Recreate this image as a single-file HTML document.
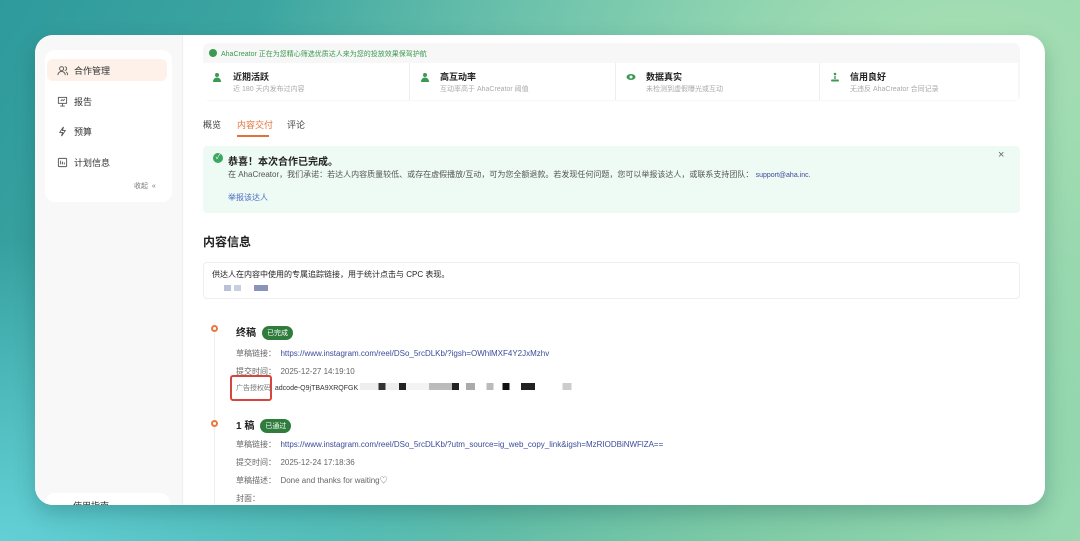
<!DOCTYPE html>
<html><head><meta charset="utf-8"><style>
*{margin:0;padding:0;box-sizing:border-box}
body{width:1080px;height:541px;overflow:hidden;font-family:"Liberation Sans","Noto Sans CJK SC",sans-serif;color:#333;
background:radial-gradient(ellipse 700px 400px at 950px 60px,#a8e0b4 0%,rgba(168,224,180,0) 100%),radial-gradient(ellipse 500px 300px at 0px 541px,#62d0d6 0%,rgba(98,208,214,0) 100%),linear-gradient(120deg,#2f9a9c 0%,#4cb3a8 45%,#7dcaa6 75%,#98d9b0 100%);position:relative}
.card{position:absolute;left:35px;top:35px;width:1010px;height:470px;background:#fff;border-radius:18px;overflow:hidden;box-shadow:0 8px 20px rgba(0,60,60,.25)}
.side{position:absolute;left:0;top:0;width:148px;height:470px;background:#f8f8f8;border-right:1px solid #eee}
.panel{position:absolute;left:10px;top:15px;width:127px;height:152px;background:#fff;border-radius:10px}
.nav{position:absolute;left:2px;width:120px;height:22px;font-size:9px;color:#333;display:flex;align-items:center;padding-left:10px;gap:6px}
.nav.act{background:#fdf1e9;border-radius:6px;color:#333}
.abs{position:absolute;white-space:nowrap}
.grn{color:#3a9a50}
.top{position:absolute;left:168px;top:8px;width:817px;height:58px;background:#f7f7f7;border-radius:6px}
.feat{position:absolute;top:20px;height:37px;background:#fff}
.ft{font-size:9px;font-weight:bold;color:#222;position:absolute;left:30px;top:7px}
.fs{font-size:7px;color:#aaa;position:absolute;left:30px;top:21px}
.fi{position:absolute;left:10px;top:9px;width:10px;height:10px}
.lbl{font-size:8px;color:#666}
.link{color:#3b4c9a}
.badge{display:inline-block;background:#2f7d3c;color:#fff;font-size:7px;padding:2px 5px;border-radius:8px;vertical-align:middle;margin-left:6px;font-weight:normal}
</style></head><body>
<div class="card">
 <div class="side">
  <div class="panel">
   <div class="nav act" style="top:9px"><svg width="11" height="11" viewBox="0 0 12 12" fill="none" stroke="#555" stroke-width="1"><circle cx="5" cy="4" r="2.2"/><path d="M1 11c0-2.5 2-4 4-4s4 1.5 4 4M8.5 2a2 2 0 010 4M10 7.5c1 .6 1.5 1.8 1.5 3.5"/></svg>合作管理</div>
   <div class="nav" style="top:40px"><svg width="11" height="11" viewBox="0 0 12 12" fill="none" stroke="#555" stroke-width="1"><rect x="1.5" y="1.5" width="9" height="6.5"/><path d="M6 8v3M3.5 11h5M4 5.5l1.5-1.5 1.5 1 1.5-1.5"/></svg>报告</div>
   <div class="nav" style="top:70px"><svg width="11" height="11" viewBox="0 0 12 12" fill="none" stroke="#555" stroke-width="1"><path d="M7 1L3 7h3l-1 4 4-6H6z"/></svg>预算</div>
   <div class="nav" style="top:101px"><svg width="11" height="11" viewBox="0 0 12 12" fill="none" stroke="#555" stroke-width="1"><rect x="1.5" y="1.5" width="9" height="9" rx="1"/><path d="M4 4v4M6 5v3M8 6v2"/></svg>计划信息</div>
   <div class="abs" style="left:89px;top:131px;font-size:7px;color:#777">收起 &nbsp;«</div>
  </div>
  <div class="abs" style="left:10px;top:458px;width:125px;height:30px;background:#fff;border-radius:10px;font-size:9px;padding:6px 0 0 28px">使用指南</div>
 </div>

 <div class="top">
  <div class="abs grn" style="left:6px;top:6px;font-size:7px"><span style="display:inline-block;width:8px;height:8px;border-radius:50%;background:#3a9a50;vertical-align:-1px;margin-right:4px"></span>AhaCreator 正在为您精心筛选优质达人来为您的投放效果保驾护航</div>
  <div class="abs" style="left:0;top:20px;width:815px;height:37px;background:#fff"></div>
  <div class="feat" style="left:0;width:206px"><svg class="fi" viewBox="0 0 10 10"><circle cx="4" cy="3" r="2" fill="#3a9a50"/><path d="M0 10c0-3 2-4.5 4-4.5S8 7 8 10z" fill="#3a9a50"/></svg><div class="ft">近期活跃</div><div class="fs">近 180 天内发布过内容</div></div>
  <div class="feat" style="left:206px;width:206px;border-left:1px solid #eee"><svg class="fi" viewBox="0 0 10 10"><circle cx="5" cy="3" r="2" fill="#3a9a50"/><path d="M1 10c0-3 2-4.5 4-4.5S9 7 9 10z" fill="#3a9a50"/></svg><div class="ft">高互动率</div><div class="fs">互动率高于 AhaCreator 阈值</div></div>
  <div class="feat" style="left:412px;width:204px;border-left:1px solid #eee"><svg class="fi" viewBox="0 0 10 10"><ellipse cx="5" cy="5" rx="4.5" ry="3" fill="#3a9a50"/><circle cx="5" cy="5" r="1.5" fill="#fff"/></svg><div class="ft">数据真实</div><div class="fs">未检测到虚假曝光或互动</div></div>
  <div class="feat" style="left:616px;width:199px;border-left:1px solid #eee"><svg class="fi" viewBox="0 0 10 10"><circle cx="5" cy="2" r="1.3" fill="#3a9a50"/><rect x="4.3" y="4" width="1.4" height="3" fill="#3a9a50"/><rect x="1" y="7.5" width="8" height="2" rx="1" fill="#3a9a50"/></svg><div class="ft">信用良好</div><div class="fs">无违反 AhaCreator 合同记录</div></div>
 </div>

 <div class="abs" style="left:168px;top:83px;font-size:9px;color:#444">概览</div>
 <div class="abs" style="left:202px;top:83px;font-size:9px;color:#e0733a">内容交付</div>
 <div class="abs" style="left:202px;top:100px;width:32px;height:2px;background:#e0733a"></div>
 <div class="abs" style="left:252px;top:83px;font-size:9px;color:#444">评论</div>

 <div class="abs" style="left:168px;top:111px;width:817px;height:67px;background:#eefaf4;border-radius:4px">
  <div class="abs" style="left:10px;top:7px;width:10px;height:10px;border-radius:50%;background:#3aa860;color:#fff;font-size:7px;text-align:center;line-height:10px">✓</div>
  <div class="abs" style="left:25px;top:7px;font-size:10px;font-weight:bold;color:#222">恭喜！本次合作已完成。</div>
  <div class="abs" style="left:25px;top:23px;font-size:8px;color:#555">在 AhaCreator，我们承诺：若达人内容质量较低、或存在虚假播放/互动，可为您全额退款。若发现任何问题，您可以举报该达人，或联系支持团队： <span class="link" style="font-size:7px">support@aha.inc.</span></div>
  <div class="abs link" style="left:25px;top:46px;font-size:8px;color:#4a6cc0">举报该达人</div>
  <div class="abs" style="left:795px;top:3px;font-size:11px;color:#666">×</div>
 </div>

 <div class="abs" style="left:168px;top:198px;font-size:12px;font-weight:bold;color:#222">内容信息</div>
 <div class="abs" style="left:168px;top:227px;width:817px;height:37px;border:1px solid #eee;border-radius:4px">
  <div class="abs" style="left:8px;top:6px;font-size:8px;color:#222">供达人在内容中使用的专属追踪链接，用于统计点击与 CPC 表现。</div>
  <div class="abs" style="left:20px;top:22px;width:7px;height:6px;background:#b8c2d8"></div>
  <div class="abs" style="left:30px;top:22px;width:7px;height:6px;background:#c8d0e0"></div>
  <div class="abs" style="left:50px;top:22px;width:14px;height:6px;background:#8894b8"></div>
 </div>

 <div class="abs" style="left:179px;top:298px;width:1px;height:180px;background:#eee"></div>
 <div class="abs" style="left:176px;top:290px;width:7px;height:7px;border-radius:50%;border:2px solid #e8783f;background:#fff"></div>
 <div class="abs" style="left:201px;top:289px;font-size:10px;font-weight:bold;color:#222">终稿<span class="badge">已完成</span></div>
 <div class="abs lbl" style="left:201px;top:313px">草稿链接： &nbsp;<span class="link">https://www.instagram.com/reel/DSo_5rcDLKb/?igsh=OWhlMXF4Y2JxMzhv</span></div>
 <div class="abs lbl" style="left:201px;top:331px">提交时间： &nbsp;2025-12-27 14:19:10</div>
 <div class="abs" style="left:195px;top:340px;width:42px;height:26px;border:2px solid #d8453a;border-radius:3px"></div>
 <div class="abs" style="left:201px;top:348px;font-size:7px;color:#777">广告授权码 &nbsp;<span style="color:#333">adcode-Q9jTBA9XRQFGK</span></div>
 <div class="abs" style="left:325px;top:348px;width:230px;height:7px;background:linear-gradient(90deg,#eee 0 8%,#333 8% 11%,#eee 11% 17%,#222 17% 20%,#f3f3f3 20% 30%,#bbb 30% 40%,#222 40% 43%,#fff 43% 46%,#aaa 46% 50%,#fff 50% 55%,#bbb 55% 58%,#fff 58% 62%,#111 62% 65%,#fff 65% 70%,#222 70% 76%,#fff 76% 88%,#ccc 88% 92%,#fff 92%)"></div>

 <div class="abs" style="left:176px;top:385px;width:7px;height:7px;border-radius:50%;border:2px solid #e8783f;background:#fff"></div>
 <div class="abs" style="left:201px;top:382px;font-size:10px;font-weight:bold;color:#222">1 稿<span class="badge">已通过</span></div>
 <div class="abs lbl" style="left:201px;top:404px">草稿链接： &nbsp;<span class="link">https://www.instagram.com/reel/DSo_5rcDLKb/?utm_source=ig_web_copy_link&amp;igsh=MzRIODBiNWFlZA==</span></div>
 <div class="abs lbl" style="left:201px;top:422px">提交时间： &nbsp;2025-12-24 17:18:36</div>
 <div class="abs lbl" style="left:201px;top:440px">草稿描述： &nbsp;Done and thanks for waiting♡</div>
 <div class="abs lbl" style="left:201px;top:458px">封面：</div>
</div>
</body></html>
